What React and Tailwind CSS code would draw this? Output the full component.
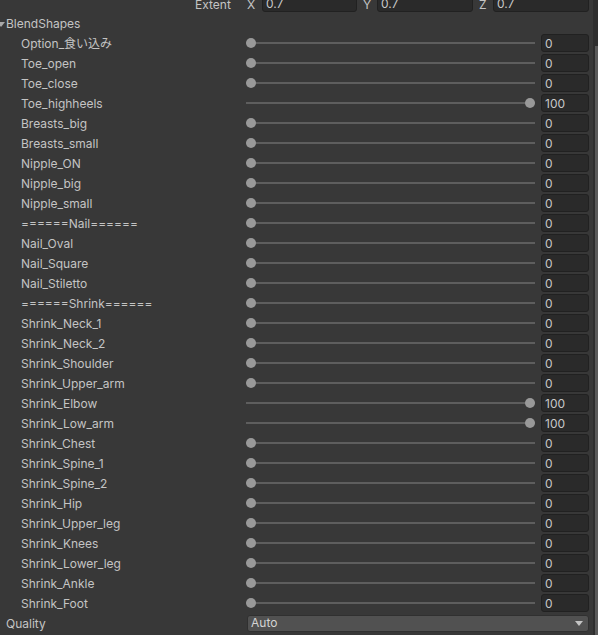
import React from "react";

const items = [
  ["Option_食い込み", 0],
  ["Toe_open", 0],
  ["Toe_close", 0],
  ["Toe_highheels", 100],
  ["Breasts_big", 0],
  ["Breasts_small", 0],
  ["Nipple_ON", 0],
  ["Nipple_big", 0],
  ["Nipple_small", 0],
  ["======Nail======", 0],
  ["Nail_Oval", 0],
  ["Nail_Square", 0],
  ["Nail_Stiletto", 0],
  ["======Shrink======", 0],
  ["Shrink_Neck_1", 0],
  ["Shrink_Neck_2", 0],
  ["Shrink_Shoulder", 0],
  ["Shrink_Upper_arm", 0],
  ["Shrink_Elbow", 100],
  ["Shrink_Low_arm", 100],
  ["Shrink_Chest", 0],
  ["Shrink_Spine_1", 0],
  ["Shrink_Spine_2", 0],
  ["Shrink_Hip", 0],
  ["Shrink_Upper_leg", 0],
  ["Shrink_Knees", 0],
  ["Shrink_Lower_leg", 0],
  ["Shrink_Ankle", 0],
  ["Shrink_Foot", 0],
];

function Field({ value, className = "" }) {
  return (
    <div
      className={
        "h-[18px] rounded-[3px] bg-[#2a2a2a] border border-[#212121] flex items-center pl-[3px] pt-[1px] text-[12px] leading-none text-[#c8c8c8] " +
        className
      }
    >
      {value}
    </div>
  );
}

function Slider({ value }) {
  return (
    <div className="flex-1 h-[20px] flex items-center">
      <div className="relative w-full h-[2px] bg-[#5e5e5e]">
        <div
          className="absolute top-[-4px] w-[10px] h-[10px] rounded-full bg-[#999999]"
          style={{ left: `calc((100% - 10px) * ${value / 100})` }}
        />
      </div>
    </div>
  );
}

export default function App() {
  return (
    <div
      className="w-[598px] h-[635px] overflow-hidden bg-[#383838] flex text-[#c4c4c4] text-[12px]"
      style={{ fontFamily: "Inter, 'Noto Sans CJK JP', sans-serif" }}
    >
      <div className="flex-1 flex flex-col pr-[4px]">
        {/* Extent row */}
        <div className="h-[20px] -mt-[7px] flex items-center shrink-0">
          <div className="w-[247px] shrink-0 pl-[195px] pt-[3px]">Extent</div>
          <div className="flex-1 flex gap-[6px]">
            {["X", "Y", "Z"].map((a, i) => (
              <div key={a} className="flex-1 flex items-center">
                <div className={(i === 0 ? "w-[15px]" : "w-[14px]") + " shrink-0 pt-[3px]"}>{a}</div>
                <Field value="0.7" className="flex-1" />
              </div>
            ))}
          </div>
        </div>
        {/* BlendShapes header */}
        <div className="h-[20px] flex items-center shrink-0">
          <div className="w-0 h-0 border-l-[4px] border-r-[4px] border-t-[5px] border-l-transparent border-r-transparent border-t-[#a8a8a8] -ml-[3px] mr-[1px] translate-y-[1px]" />
          <span className="translate-y-[1px]">BlendShapes</span>
        </div>
        {items.map(([name, v]) => (
          <div key={name} className="h-[20px] flex items-center shrink-0">
            <div className="w-[246px] shrink-0 pl-[21px] whitespace-nowrap translate-y-[1px]">{name}</div>
            <Slider value={v} />
            <Field value={String(v)} className="w-[48px] ml-[6px] shrink-0" />
          </div>
        ))}
        {/* Quality */}
        <div className="h-[20px] flex items-center shrink-0">
          <div className="w-[247px] shrink-0 pl-[6px] translate-y-[1px]">Quality</div>
          <div className="flex-1 h-[17px] rounded-[3px] bg-[#515151] border border-[#303030] flex items-center justify-between pl-[3px] pr-[5px] text-[#d4d4d4]">
            <span>Auto</span>
            <div className="w-0 h-0 border-l-[4px] border-r-[4px] border-t-[5px] border-l-transparent border-r-transparent border-t-[#c4c4c4]" />
          </div>
        </div>
      </div>
      {/* scrollbar */}
      <div className="w-[5px] shrink-0 bg-[#2e2e2e] flex flex-col items-end">
        <div className="h-[46px] shrink-0" />
        <div className="w-[3px] flex-1 bg-[#5a5a5a]" />
      </div>
    </div>
  );
}
